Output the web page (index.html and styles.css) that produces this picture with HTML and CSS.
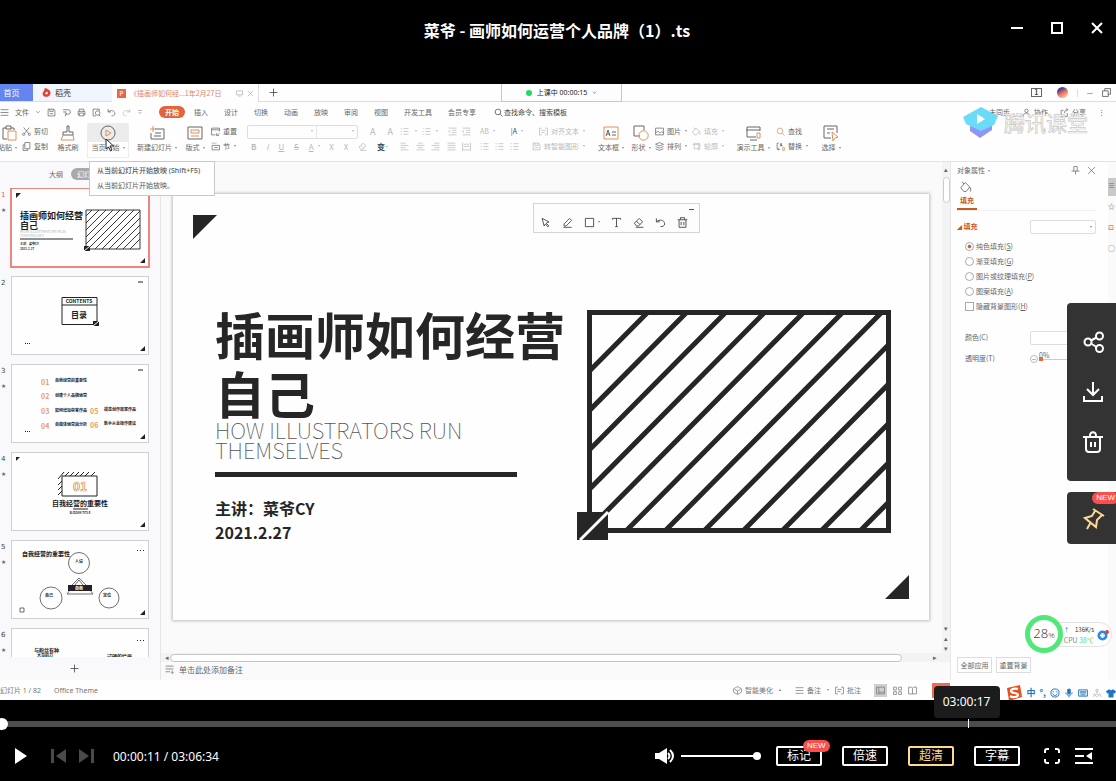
FILE: index.html
```html
<!DOCTYPE html>
<html lang="zh-CN">
<head>
<meta charset="utf-8">
<title>菜爷 - 画师如何运营个人品牌（1）.ts</title>
<link rel="stylesheet" href="styles.css">
</head>
<body>
<svg class="defs" aria-hidden="true">
  <defs>
    <symbol id="menu" viewBox="0 0 16 16"><path d="M1 3h14M1 8h14M1 13h14"/></symbol>
    <symbol id="chev" viewBox="0 0 16 16"><path d="M3 5l5 6 5-6"/></symbol>
    <symbol id="save" viewBox="0 0 16 16"><path d="M2 2h10l2 2v10H2zM5 2v4h6V2M5 10h6"/></symbol>
    <symbol id="export" viewBox="0 0 16 16"><path d="M2 3h9a4 4 0 0 1 0 8H6M6 11v4M2 7h6M9 11l-4-3"/></symbol>
    <symbol id="print" viewBox="0 0 16 16"><path d="M4 6V2h8v4M4 12H2V6h12v6h-2M4 9h8v5H4z"/></symbol>
    <symbol id="preview" viewBox="0 0 16 16"><path d="M13 5V2H2v12h5M12 12l3 3"/><circle cx="10" cy="9" r="4"/></symbol>
    <symbol id="undo" viewBox="0 0 16 16"><path d="M2 2v5h5M2 7c4-4 12-3 12 3 0 3-3 4-6 4"/></symbol>
    <symbol id="redo" viewBox="0 0 16 16"><path d="M14 2v5H9M14 7C10 3 2 4 2 10c0 3 3 4 6 4"/></symbol>
    <symbol id="more" viewBox="0 0 16 16"><path d="M3 4h10M4 8l4 4 4-4"/></symbol>
    <symbol id="search" viewBox="0 0 16 16"><circle cx="7" cy="7" r="5"/><path d="M11 11l4 4"/></symbol>
    <symbol id="paste" viewBox="0 0 16 16"><path d="M5 3H2v11h4M10 3h3v2M5 1h5v3H5z"/><path class="warm" d="M7 6h8v9H7z"/></symbol>
    <symbol id="cut" viewBox="0 0 16 16"><path d="M3 1l9 11M13 1L4 12"/><circle cx="3" cy="13" r="2"/><circle cx="13" cy="13" r="2"/></symbol>
    <symbol id="copy" viewBox="0 0 16 16"><path d="M5 1h9v11H5zM5 5H2v10h8v-3"/></symbol>
    <symbol id="brush" viewBox="0 0 16 16"><path d="M7 1h2v6h4v3H3V7h4z"/><path class="warm" d="M3 10L1 15h13l-1-5"/></symbol>
    <symbol id="playc" viewBox="0 0 16 16"><circle cx="8" cy="8" r="7"/><path class="warm" d="M6 5l5 3-5 3z"/></symbol>
    <symbol id="newslide" viewBox="0 0 16 16"><path d="M6 4h9v10H2V8M6 8h6M5 11h7"/><path class="warm" d="M4 1v6M1 4h6"/></symbol>
    <symbol id="layout" viewBox="0 0 16 16"><path d="M1 2h14v12H1z"/><path class="warm" d="M4 5h8v3H4zM4 11h8"/></symbol>
    <symbol id="reset" viewBox="0 0 16 16"><path d="M8 14H1V2h14v6M1 5h14M15 11l-4 4M10 11v4h4"/></symbol>
    <symbol id="section" viewBox="0 0 16 16"><path d="M2 6h13v8H2zM6 10h6"/><path class="warm" d="M1 2h9"/></symbol>
    <symbol id="eraser" viewBox="0 0 16 16"><path d="M9 2l5 5-6 6H5L2 9zM5 6l5 5M4 15h11"/></symbol>
    <symbol id="bullets" viewBox="0 0 16 16"><path d="M1 3h2M6 3h9M1 8h2M6 8h9M1 13h2M6 13h9"/></symbol>
    <symbol id="indent" viewBox="0 0 16 16"><path d="M1 2h14M7 6h8M7 10h8M1 14h14M4 6L1 8l3 2"/></symbol>
    <symbol id="left" viewBox="0 0 16 16"><path d="M1 2h9M1 6h14M1 10h9M1 14h14"/></symbol>
    <symbol id="center" viewBox="0 0 16 16"><path d="M4 2h8M1 6h14M4 10h8M1 14h14"/></symbol>
    <symbol id="right" viewBox="0 0 16 16"><path d="M6 2h9M1 6h14M6 10h9M1 14h14"/></symbol>
    <symbol id="just" viewBox="0 0 16 16"><path d="M1 2h14M1 6h14M1 10h14M1 14h14"/></symbol>
    <symbol id="spread" viewBox="0 0 16 16"><path d="M1 1v14M15 1v14M3 4h10M3 8h10M1 14h14"/></symbol>
    <symbol id="textdoc" viewBox="0 0 16 16"><path d="M5 2H1v12h4M11 2h4v12h-4M4 6h8M4 10h6"/></symbol>
    <symbol id="textbox" viewBox="0 0 16 16"><path class="warm" d="M1 2h14v12H1z"/><path d="M3 11l2-6 2 6M4 9h3M9 7h4M9 10h4"/></symbol>
    <symbol id="shapes" viewBox="0 0 16 16"><path d="M7 11H1V1h10v4"/><circle class="warm" cx="10.500" cy="10.500" r="4.700"/></symbol>
    <symbol id="picture" viewBox="0 0 16 16"><path d="M1 2h14v12H1zM1 11l4-4 4 4 3-3 3 3"/></symbol>
    <symbol id="layers" viewBox="0 0 16 16"><path d="M8 1l7 3-7 3-7-3zM1 8l7 3 7-3M1 12l7 3 7-3"/></symbol>
    <symbol id="bucket" viewBox="0 0 16 16"><path d="M7 2l6 6-5 6H5L1 9zM5 4L3 1M13 8c1 2 2 3 1 6"/></symbol>
    <symbol id="outline" viewBox="0 0 16 16"><path d="M4 1v11h11M1 4h11v11M6 3h8v7"/></symbol>
    <symbol id="present" viewBox="0 0 16 16"><path d="M11 12H2V2h13v4M1 5h14M5 15h7"/><path class="warm" d="M12 8h3v5h-3z"/></symbol>
    <symbol id="replace" viewBox="0 0 16 16"><path d="M5 2H2v11h4M4 11l2 2-2 2M7 8l2-6 2 6M8 6h3"/><path class="warm" d="M12 10h3v5h-3z"/></symbol>
    <symbol id="select" viewBox="0 0 16 16"><path d="M8 13H1V1h13v7M4 4h7M4 8h3"/><path class="warm" d="M9 7l6 5-3 1-2 3z"/></symbol>
    <symbol id="cursor" viewBox="0 0 16 16"><path d="M3 2l10 5-4 2 4 4-2 1-3-4-2 3z"/></symbol>
    <symbol id="pen" viewBox="0 0 16 16"><path d="M3 10l8-8 3 3-8 8H3zM2 15h12"/></symbol>
    <symbol id="square" viewBox="0 0 16 16"><path d="M2 2h12v12H2z"/></symbol>
    <symbol id="tee" viewBox="0 0 16 16"><path d="M2 4V2h12v2M8 2v12M6 14h4"/></symbol>
    <symbol id="bin" viewBox="0 0 16 16"><path d="M1 4h14M5 4V1h6v3M3 4v11h10V4M6 7v5M10 7v5"/></symbol>
    <symbol id="cross" viewBox="0 0 16 16"><path d="M2 2l12 12M14 2L2 14"/></symbol>
    <symbol id="plus" viewBox="0 0 16 16"><path d="M8 1v14M1 8h14"/></symbol>
    <symbol id="pin" viewBox="0 0 16 16"><path d="M5 1h6M5 1v8M11 1v8M1 9h14M8 9v6"/></symbol>
    <symbol id="notes" viewBox="0 0 16 16"><path d="M1 2h14M1 7h14M1 12h8M13 10v5M11 13l2 2 2-2"/></symbol>
    <symbol id="cube" viewBox="0 0 16 16"><path d="M8 1l7 4v6l-7 4-7-4V5zM3 6l5 3 5-3M8 9v5"/></symbol>
    <symbol id="grid4" viewBox="0 0 16 16"><path d="M1 2h5v5H1zM10 2h5v5h-5zM1 10h5v5H1zM10 10h5v5h-5z"/></symbol>
    <symbol id="book" viewBox="0 0 16 16"><path d="M1 2h5l2 2 2-2h5v12H1zM8 4v10"/></symbol>
    <symbol id="pane" viewBox="0 0 16 16"><path d="M1 2h14v12H1zM5 2v12M5 11h10"/></symbol>
    <symbol id="cloud" viewBox="0 0 16 16"><circle cx="8" cy="8" r="6"/><path d="M8 4v5"/></symbol>
    <symbol id="person" viewBox="0 0 16 16"><circle cx="8" cy="5" r="3"/><path d="M2 15c0-8 12-8 12 0"/></symbol>
    <symbol id="shareout" viewBox="0 0 16 16"><path d="M6 4H2v11h11V9M8 9c0-4 2-6 6-6M11 1l3 2-3 3"/></symbol>
    <symbol id="screen" viewBox="0 0 16 16"><path d="M1 2h14v9H1zM5 14h6"/></symbol>
    <symbol id="restore" viewBox="0 0 16 16"><path d="M1 5h10v10H1zM5 5V1h10v10h-4"/></symbol>
  </defs>
</svg>

<main class="player">
  <header class="titlebar">
    <h1>菜爷 - 画师如何运营个人品牌（1）.ts</h1>
    <div class="winbtns">
      <button aria-label="最小化"><svg viewBox="0 0 14 14"><path d="M1 7h12"/></svg></button>
      <button aria-label="最大化"><svg viewBox="0 0 14 14"><path d="M2 2h10v10H2z"/></svg></button>
      <button aria-label="关闭"><svg viewBox="0 0 14 14"><path d="M2 2l10 10M12 2L2 12"/></svg></button>
    </div>
  </header>

  <section class="stage">
    <nav class="tabs">
      <a class="tab home" href="#">首页</a>
      <a class="tab docer" href="#"><svg class="flame" viewBox="0 0 16 16"><path d="M5 0c6 1 11 5 10 10-1 7-13 8-14 0 0-3 4-5 4-10z"/><path class="cut" d="M5 9l5-3v5H7z"/></svg>稻壳</a>
      <a class="tab doc" href="#"><span class="ppt">P</span>《插画师如何经...1年2月27日<svg class="ic dim push"><use href="#screen"/></svg><svg class="ic dim"><use href="#cross"/></svg></a>
      <button class="newtab" aria-label="新建"><svg class="ic"><use href="#plus"/></svg></button>
      <div class="tabend"><span class="one">1</span><span class="avatar"></span><i></i><span>—</span><svg class="ic"><use href="#restore"/></svg></div>
      <div class="live"><b></b>上课中 00:00:15<svg class="ic"><use href="#chev"/></svg></div>
    </nav>

    <nav class="menubar">
      <div class="quick">
        <svg class="ic"><use href="#menu"/></svg><span>文件</span><svg class="ic small"><use href="#chev"/></svg>
        <svg class="ic"><use href="#save"/></svg><svg class="ic"><use href="#export"/></svg><svg class="ic"><use href="#print"/></svg><svg class="ic"><use href="#preview"/></svg><svg class="ic"><use href="#undo"/></svg><svg class="ic dim"><use href="#redo"/></svg><svg class="ic small"><use href="#more"/></svg>
      </div>
      <a class="on" href="#">开始</a><a href="#">插入</a><a href="#">设计</a><a href="#">切换</a><a href="#">动画</a><a href="#">放映</a><a href="#">审阅</a><a href="#">视图</a><a href="#">开发工具</a><a href="#">会员专享</a>
      <label class="find"><svg class="ic"><use href="#search"/></svg><input value="查找命令、搜索模板" aria-label="查找命令"></label>
      <div class="menuend"><span><svg class="ic"><use href="#cloud"/></svg>未同步</span><span><svg class="ic"><use href="#person"/></svg>协作</span><span><svg class="ic"><use href="#shareout"/></svg>分享</span><span>⋮</span></div>
    </nav>

    <div class="ribbon">
      <button class="big clip"><svg><use href="#paste"/></svg><span>粘贴<i></i></span></button>
      <div class="pair"><button><svg><use href="#cut"/></svg>剪切</button><button><svg><use href="#copy"/></svg>复制</button></div>
      <button class="big w28"><svg><use href="#brush"/></svg><span>格式刷</span></button>
      <button class="big w40 hover"><svg><use href="#playc"/></svg><span>当页开始<i></i></span></button>
      <button class="big w48"><svg><use href="#newslide"/></svg><span>新建幻灯片<i></i></span></button>
      <button class="big w24"><svg><use href="#layout"/></svg><span>版式<i></i></span></button>
      <div class="pair"><button><svg><use href="#reset"/></svg>重置</button><button><svg><use href="#section"/></svg>节<i></i></button></div>
      <div class="pair faint font">
        <div><span class="combo"><select aria-label="字体"><option></option></select><i></i><select aria-label="字号"><option></option></select><i></i></span><span>A</span><span>A</span></div>
        <div><b>B</b><em>I</em><u>U</u><s>S</s><span><u>A</u><i></i></span><span>X</span><span>X</span><svg><use href="#eraser"/></svg><strong>变<i></i></strong></div>
      </div>
      <div class="pair faint five">
        <div><svg><use href="#bullets"/></svg><i></i><svg><use href="#bullets"/></svg><i></i><span></span><svg><use href="#indent"/></svg><svg><use href="#indent"/></svg></div>
        <div><svg><use href="#left"/></svg><svg><use href="#center"/></svg><svg><use href="#right"/></svg><svg><use href="#just"/></svg><svg><use href="#spread"/></svg></div>
      </div>
      <div class="pair faint dir">
        <div><span>AB<i></i></span><span class="dark">|A<i></i></span><span><svg><use href="#textdoc"/></svg>对齐文本<i></i></span></div>
        <div><span class="trio"><svg><use href="#bullets"/></svg><svg><use href="#bullets"/></svg><svg><use href="#bullets"/></svg></span><span><svg><use href="#save"/></svg>转智能图形<i></i></span></div>
      </div>
      <button class="big w32"><svg><use href="#textbox"/></svg><span>文本框<i></i></span></button>
      <button class="big w24"><svg><use href="#shapes"/></svg><span>形状<i></i></span></button>
      <div class="pair"><button><svg><use href="#picture"/></svg>图片<i></i></button><button><svg><use href="#layers"/></svg>排列<i></i></button></div>
      <div class="pair faint"><button><svg><use href="#bucket"/></svg>填充<i></i></button><button><svg><use href="#outline"/></svg>轮廓<i></i></button></div>
      <button class="big w36"><svg><use href="#present"/></svg><span>演示工具<i></i></span></button>
      <div class="pair"><button><svg><use href="#search" class="warm"/></svg>查找</button><button><svg><use href="#replace"/></svg>替换<i></i></button></div>
      <button class="big w24"><svg><use href="#select"/></svg><span>选择<i></i></span></button>
    </div>

    <div class="work">
      <aside class="outline">
        <div class="switch"><button>大纲</button><button class="on">幻灯片</button></div>
        <ol class="thumbs">
          <li class="cur"><span>1<br><small>★</small></span>
            <svg viewBox="0 0 138 79"><path class="k" d="M5 5h5l-5 5zM134 70v5h-5z"/><text x="9" y="31" class="t9">插画师如何经营</text><text x="9" y="41" class="t9">自己</text><text x="9" y="45" class="t4 g">HOW ILLUSTRATORS RUN</text><text x="9" y="49" class="t4 g">THEMSELVES</text><path class="l" d="M9 51h53"/><text x="9" y="57" class="t3">主讲：菜爷CY</text><text x="9" y="62" class="t3">2021.2.27</text><path class="l hair" d="M75 22h54v39H75zM75 28l6-6M75 35l13-13M75 42l20-20M75 49l27-27M75 56l34-34M77 61l39-39M84 61l39-39M91 61l38-38M98 61l31-31M105 61l24-24M112 61l17-17M119 61l10-10"/><path class="k" d="M73 58h6v5h-6z"/><path class="w" d="M73 63l6-5"/></svg></li>
          <li><span>2</span>
            <svg viewBox="0 0 138 79"><path class="l" d="M51 21.500h35v27H51zM51 29h35M127 6h5"/><text x="68" y="27" class="t5 mid">CONTENTS</text><text x="68" y="42" class="t8 mid">目录</text><path class="k" d="M82 45h6v5h-6zM134 70v5h-5zM14 67h1v1h-1zM16 67h1v1h-1zM18 67h1v1h-1z"/><path class="w" d="M82 50l6-5"/></svg></li>
          <li><span>3<br><small>★</small></span>
            <svg viewBox="0 0 138 79"><g class="n"><text x="30" y="21">01</text><text x="30" y="35">02</text><text x="30" y="50">03</text><text x="30" y="65">04</text><text x="79" y="50">05</text><text x="79" y="64">06</text></g><g class="t35"><text x="44" y="18">自我经营的重要性</text><text x="44" y="33">创建个人品牌运营</text><text x="44" y="48">如何增加获客作品</text><text x="44" y="62">自媒体运营與分析</text><text x="93" y="47">提高创作效率作品</text><text x="93" y="61">新手从业操作建议</text></g><path class="l" d="M127 6h5"/><path class="k" d="M134 70v5h-5zM14 67h1v1h-1zM16 67h1v1h-1zM18 67h1v1h-1z"/></svg></li>
          <li><span>4<br><small>★</small></span>
            <svg viewBox="0 0 138 79"><path class="k" d="M5 5h4l-4 4zM134 70v5h-5z"/><path class="l" d="M51 24h35v20H51zM47 27l6-7M54 24l4-4M59 24l4-4M64 24l4-4M69 24l4-4M74 24l4-4M80 24l4-4M47 33l4-4M47 38l4-4M47 43l4-4M62 57h15"/><text x="69" y="39" class="big01">01</text><text x="69" y="54" class="t65 mid">自我经营的重要性</text><text x="69" y="62" class="t3 mid">SLOGAN TITLE</text></svg></li>
          <li><span>5<br><small>★</small></span>
            <svg viewBox="0 0 138 79"><text x="11" y="16" class="t6">自我经营的重要性</text><circle class="thin" cx="68" cy="23" r="10.500"/><circle class="thin" cx="40" cy="58" r="11"/><circle class="thin" cx="98" cy="58" r="10"/><path class="k" d="M57 45h24v6H57zM126 10h1v1h-1zM129 10h1v1h-1zM132 10h1v1h-1zM134 70v5h-5z"/><path class="thin" d="M61 45l7-7 7 7M64 45l4-5 4 5M56 54h26l-3-4M56 54l3-4M9 68h4v4H9z"/><text x="68" y="50" class="t4 mid wt">自我</text><text x="68" y="23" class="t4 mid">人设</text><text x="38" y="57" class="t4 mid">自己</text><text x="96" y="57" class="t4 mid">定位</text></svg></li>
          <li><span>6<br><small>★</small></span>
            <svg viewBox="0 0 138 79"><text x="23" y="24" class="t45">与粉丝有种</text><text x="26" y="29" class="t4">大哥的力</text><text x="96" y="30" class="t45">过硬的绘画</text><path class="k" d="M126 12h1v1h-1zM129 12h1v1h-1zM132 12h1v1h-1z"/></svg></li>
        </ol>
        <button class="add" aria-label="新建幻灯片"><svg class="ic"><use href="#plus"/></svg></button>
      </aside>

      <section class="editor">
        <div class="canvas">
          <article class="slide">
            <svg class="tri tl" viewBox="0 0 24 24"><path d="M0 0h24L0 24z"/></svg>
            <div class="copytext">
              <h2>插画师如何经营<br>自己</h2>
              <p class="en">HOW ILLUSTRATORS RUN<br>THEMSELVES</p>
              <hr>
              <p class="by">主讲：菜爷CY<br>2021.2.27</p>
            </div>
            <svg class="art" viewBox="0 0 315 232">
              <clipPath id="box"><path d="M12 3h300v217H12z"/></clipPath>
              <path class="bars" clip-path="url(#box)" d="M-70 223L153-2M-31 223L192-2M-109 223L114-2M-148 223L75-2M8 223L231-2M47 223L270-2M86 223L309-2M125 223L348-2M164 223L387-2M203 223L426-2M242 223L465-2M281 223L504-2"/>
              <path class="frame" d="M12.500 2.500h299v218h-299z"/>
              <path d="M0 202h31v28H0z"/><path class="slash" d="M3 230l28-28"/>
            </svg>
            <svg class="tri br" viewBox="0 0 24 24"><path d="M24 0v24H0z"/></svg>
          </article>
          <div class="annot"><span class="dash"></span><svg class="ic"><use href="#cursor"/></svg><svg class="ic"><use href="#pen"/></svg><span class="sq"><svg class="ic"><use href="#square"/></svg><i></i></span><svg class="ic"><use href="#tee"/></svg><svg class="ic"><use href="#eraser"/></svg><svg class="ic"><use href="#undo"/></svg><svg class="ic"><use href="#bin"/></svg></div>
        </div>
        <div class="vbar"><span>▴</span><b></b><span class="dn">▾<br>▴<br>▾</span></div>
        <div class="hbar"><span>◂</span><b></b><span>▸</span></div>
        <div class="note"><svg class="ic"><use href="#notes"/></svg>单击此处添加备注</div>
      </section>

      <aside class="props">
        <header><span>对象属性<i></i></span><svg class="ic"><use href="#pin"/></svg><svg class="ic"><use href="#cross"/></svg></header>
        <div class="ptab"><svg><use href="#bucket"/></svg><b>填充</b></div>
        <div class="sect"><b><small>◢</small> 填充</b><span class="drop"><select aria-label="填充样式"><option></option></select><i></i></span></div>
        <div class="opts">
          <label><input type="radio" name="f" checked>纯色填充(<u>S</u>)</label>
          <label><input type="radio" name="f">渐变填充(<u>G</u>)</label>
          <label><input type="radio" name="f">图片或纹理填充(<u>P</u>)</label>
          <label><input type="radio" name="f">图案填充(<u>A</u>)</label>
          <label><input type="checkbox">隐藏背景图形(<u>H</u>)</label>
        </div>
        <div class="row"><label for="col">颜色(C)</label><select id="col"><option></option></select></div>
        <div class="row"><label for="alpha">透明度(T)</label><span class="alpha"><em>−</em><span class="slide-in"><span>0%</span><input id="alpha" type="range" value="0"></span></span></div>
        <footer><button>全部应用</button><button>重置背景</button></footer>
      </aside>
      <div class="strip"><span class="on">≡</span><span>☆</span><span>⊡</span><span>○</span></div>
    </div>

    <footer class="status">
      <span class="pg">幻灯片 1 / 82</span><span>Office Theme</span>
      <div class="tools"><span><svg class="ic"><use href="#cube"/></svg>智能美化<i class="up"></i></span><span><svg class="ic"><use href="#menu"/></svg>备注<i></i></span><span><svg class="ic"><use href="#textdoc"/></svg>批注</span><span class="views"><svg class="ic act"><use href="#pane"/></svg><svg class="ic"><use href="#grid4"/></svg><svg class="ic"><use href="#book"/></svg></span><b></b></div>
    </footer>

    <div class="tip"><b>从当前幻灯片开始放映 (Shift+F5)</b><span>从当前幻灯片开始放映。</span></div>
    <svg class="pointer" viewBox="0 0 10 14"><path d="M1 1v10l2.500-2 2 4 1.500-1-2-4h3.500z"/></svg>

    <div class="mark">
      <svg viewBox="0 0 36 31"><path fill="#8f96f5" d="M7 17l11 6 11-6v6l-12 8-10-7z"/><path fill="#6bdcf8" d="M18 0l17 9-4 9-13 6L3 17 0 10z"/><path fill="#fff" d="M14 7l8 5-8 5z"/></svg><span>腾讯课堂</span>
    </div>

    <div class="meter"><b>28<small>%</small></b><p><span><em>↑</em> 136K/s</span><span class="cpu">CPU <q>38℃</q></span></p><svg viewBox="0 0 12 12"><circle cx="5.500" cy="6.500" r="5" fill="#2b8bea"/><path stroke="#fff" stroke-width="2" d="M5.500 4v5M3 6.500h5"/><circle cx="10" cy="3" r="2" fill="#ee3b35"/></svg></div>

    <div class="ime">
      <svg viewBox="0 0 16 16"><path fill="#e8501f" d="M1 3l13-3 2 12-13 4z"/><path fill="none" stroke="#fff" stroke-width="2.200" d="M12 4c-3-1-7 0-7 2 0 3 7 1 7 4 0 2-5 3-8 1"/></svg>
      <span>中</span><span>°,</span>
      <svg class="s" viewBox="0 0 16 16"><circle cx="8" cy="8" r="6.500"/><path d="M5 5v2M11 5v2M4 9c2 4 6 4 8 0"/></svg>
      <svg class="s" viewBox="0 0 16 16"><path fill="#1d74c4" d="M6 2h4v7H6z"/><path d="M3 7c0 6 10 6 10 0M8 12v3"/></svg>
      <svg class="s" viewBox="0 0 16 16"><path d="M1 3h14v10H1zM3 6h10M3 8h10M4 11h8"/></svg>
      <svg class="s pale" viewBox="0 0 16 16"><circle cx="8" cy="4" r="2"/><path d="M8 6v5M2 14l2-5 3 5M9 14l3-5 3 5"/></svg>
      <svg viewBox="0 0 16 16"><path fill="#1d74c4" d="M5 2c2 2 4 2 6 0l5 3-2 4-2-1v7H4V8L2 9 0 5z"/></svg>
    </div>

    <div class="dock">
      <div class="panel">
        <button aria-label="分享"><svg viewBox="0 0 22 22"><circle cx="5" cy="11" r="3.500"/><circle cx="16.500" cy="5" r="3.500"/><circle cx="16.500" cy="17.500" r="3.500"/><path d="M8 9.500l5.500-3M8 12.500l5.500 3.500"/></svg></button>
        <button aria-label="下载"><svg viewBox="0 0 22 22"><path d="M10 1v13M4 8l6 6 6-6M1 15v5h18v-5"/></svg></button>
        <button aria-label="删除"><svg viewBox="0 0 22 22"><path d="M0 6h20M7 5c0-5 6-5 6 0M3 6v12q0 3 3 3h8q3 0 3-3V6M8 11v5M12 11v5"/></svg></button>
      </div>
      <div class="panel gold">
        <button aria-label="置顶"><svg viewBox="0 0 22 22"><path d="M10 1l11 7M12 3L9 8l-7 2 11 9 1-7 5-5M8 14l-4 7"/></svg></button><span class="new">NEW</span>
      </div>
    </div>
  </section>

  <footer class="controls">
    <div class="track"><span class="knob"></span><span class="hover"><time>03:00:17</time></span></div>
    <div class="bar">
      <button class="play" aria-label="播放"><svg viewBox="0 0 12 18"><path d="M0 1l12 8-12 8z"/></svg></button>
      <button class="skip" aria-label="上一个"><svg viewBox="0 0 16 14"><path d="M0 0h3v14H0zM15 0v14L5 7z"/></svg></button>
      <button class="skip" aria-label="下一个"><svg viewBox="0 0 16 14"><path d="M13 0h3v14h-3zM1 0v14l10-7z"/></svg></button>
      <span class="time">00:00:11 / 03:06:34</span>
      <div class="end">
        <button class="vol" aria-label="音量"><svg viewBox="0 0 20 18"><path class="f" d="M0 6h4l8-5v16l-8-5H0z"/><path class="o" d="M13 6q3 3 0 6M15 3q6 6 0 12"/></svg></button>
        <input class="level" type="range" value="100" aria-label="音量大小">
        <div class="modes"><button>标记<span class="new">NEW</span></button><button>倍速</button><button class="hd">超清</button><button>字幕</button></div>
        <button class="tool" aria-label="全屏"><svg viewBox="0 0 18 18"><path d="M2 6V4q0-2 2-2h2M12 2h2q2 0 2 2v2M16 12v2q0 2-2 2h-2M6 16H4q-2 0-2-2v-2"/></svg></button>
        <button class="tool" aria-label="播放列表"><svg viewBox="0 0 18 18"><path d="M0 2h18M0 9h9M0 16h18"/><path class="f" d="M17 5v8l-6-4z"/></svg></button>
      </div>
    </div>
  </footer>
</main>
</body>
</html>
```
FILE: styles.css
```css
* { box-sizing: border-box; }
body { margin: 0; background: #000; font-family: "Noto Sans", "Noto Sans CJK SC", sans-serif; }
h1, h2, p, ol { margin: 0; padding: 0; }
button, input, select { font: inherit; color: inherit; background: none; border: 0; padding: 0; margin: 0; }
a { color: inherit; text-decoration: none; }
svg { display: block; flex: none; }
.defs { position: absolute; width: 0; height: 0; }
.player { display: flex; flex-direction: column; min-height: 100vh; overflow: hidden; }

/* player title */
.titlebar { position: relative; height: 84px; padding: 18px 2px 0 0; color: #fff; text-align: center; }
.titlebar h1 { font: 700 16px/24px "Noto Sans CJK SC", sans-serif; }
.winbtns { position: absolute; top: 21px; right: 12px; display: flex; gap: 26px; }
.winbtns svg { width: 14px; height: 14px; fill: none; stroke: #fff; stroke-width: 2; }

/* recorded desktop */
.stage { position: relative; flex: 1; display: flex; flex-direction: column; background: #fdfefd; color: #666; font: 7px/15px "Noto Sans CJK SC", sans-serif; overflow: hidden; white-space: nowrap; }
.ic, .ribbon svg { width: 9px; height: 9px; fill: none; stroke: currentColor; stroke-width: 1.3; }
.ic.small { width: 6px; height: 6px; }
.dim { color: #bbb; }
.warm { stroke: #df905c; }
.stage i { display: inline-block; margin-left: 3px; border: 1px solid transparent; border-top: 2px solid #888; vertical-align: middle; }
.stage i.up { border-top: 0; border-bottom: 2px solid #666; }

.tabs { position: relative; display: flex; height: 18px; border-bottom: 1px solid #dcdfe2; }
.tab { display: flex; align-items: center; gap: 4px; font-size: 8px; }
.home { width: 33px; justify-content: center; padding-right: 10px; background: #6484ef; color: #fff; }
.docer { width: 79px; padding-left: 9px; background: #f1f6fe; color: #333; }
.flame { width: 9px; height: 9px; fill: #e6402b; }
.flame .cut { fill: #fff; }
.doc { width: 147px; padding: 0 4px 0 5px; height: 18px; background: #fff; border-right: 1px solid #ddd; color: #e38067; font-size: 7px; }
.ppt { width: 9px; height: 9px; background: #e4694b; color: #fff; font-size: 6px; line-height: 9px; text-align: center; }
.doc .push { margin-left: auto; }
.doc .ic { width: 7px; height: 7px; color: #999; }
.newtab { padding: 0 10px; color: #333; }
.tabend { display: flex; align-items: center; gap: 9px; margin-left: auto; padding-right: 5px; color: #444; }
.tabend i { height: 8px; margin: 0; border: 0; border-left: 1px solid #ddd; }
.one { width: 11px; height: 9px; border: 1px solid #666; line-height: 7px; font-weight: 700; text-align: center; }
.avatar { width: 11px; height: 11px; margin-left: 6px; border-radius: 50%; background: linear-gradient(150deg, #4a3da8 25%, #e76f55 50%, #f5b79a 80%); }
.live { position: absolute; left: 501px; top: 0; width: 121px; height: 18px; display: flex; align-items: center; justify-content: center; gap: 5px; background: #fdfdff; border: 1px solid #c5c7cb; border-top: 0; color: #222; font-family: "Noto Sans", "Noto Sans CJK SC", sans-serif; }
.live b { width: 6px; height: 6px; border-radius: 50%; background: #23d865; }
.live .ic { width: 5px; height: 5px; }

.menubar { display: flex; align-items: center; height: 20px; gap: 15px; }
.quick { display: flex; align-items: center; gap: 6px; width: 151px; margin-right: -7px; }
.menubar .on { margin: 0 -7px 0 0; padding: 0 6px; border-radius: 6px; background: #e2633d; color: #fff; font-weight: 700; line-height: 12px; }
.menubar a + a { margin-left: 1px; }
.find { display: flex; align-items: center; gap: 1px; margin-left: 3px; color: #444; }
.find input { width: 76px; }
.menuend { display: flex; align-items: center; gap: 12px; margin-left: auto; padding-right: 11px; }
.menuend span { display: flex; gap: 3px; align-items: center; }

.ribbon { display: grid; grid-template-columns: 22px 32px 34px 45px 50px 28px 36px 153px 80px 115px 34px 26px 37px 43px 41px 43px 24px; height: 40px; padding-top: 2px; justify-items: start; border-bottom: 1px solid #e2e4e4; }
.big { display: flex; flex-direction: column; align-items: center; height: 33px; }
.big svg { width: 16px; height: 16px; stroke-width: 1; margin-top: 1px; }
.big span { line-height: 13px; }
.w24 { width: 24px; }
.w28 { width: 28px; }
.w32 { width: 32px; }
.w36 { width: 36px; }
.w40 { width: 40px; }
.w48 { width: 48px; }
.clip { width: 17px; align-items: flex-end; overflow: hidden; }
.hover.big { background: linear-gradient(#ececec 55%, #fff 55%); outline: 1px solid #eee; }
.pair { display: grid; grid-template-rows: 15px 15px; align-content: start; }
.pair button, .pair div, .pair span { display: flex; align-items: center; gap: 3px; }
.pair i { margin-left: 1px; }
.faint { color: #b9b9b9; }
.faint i { opacity: 0.6; }
.faint strong, .faint .dark { color: #444; }
.font { width: 146px; font-size: 9px; }
.font div { justify-content: space-between; }
.font .combo { gap: 0; width: 111px; height: 14px; padding-right: 3px; border: 1px solid #ddd; border-radius: 2px; }
.combo select { height: 12px; appearance: none; width: 64px; }
.combo select + i + select { width: 36px; margin-left: 3px; border-left: 1px solid #e6e6e6; }
.font div + div { padding: 0 5px 0 4px; font-size: 8px; }
.five { width: 71px; }
.five div { justify-content: space-between; }
.dir { width: 105px; }
.dir div { justify-content: space-between; }
.dir .trio { gap: 6px; }

.work { flex: 1; display: grid; grid-template-columns: 161px 1fr 158px 8px; min-height: 518px; background: #f9faf9; }
.outline { display: flex; flex-direction: column; border-right: 1px solid #e6e6e6; background: #f9f9fb; }
.switch { display: flex; gap: 8px; height: 26px; padding: 0 0 2px 49px; align-items: center; }
.switch .on { padding: 0 6px; border-radius: 6px; background: #a9a9a9; color: #fff; line-height: 12px; }
.thumbs { flex: 1 1 0; display: flex; flex-direction: column; gap: 9px; min-height: 0; overflow: hidden; list-style: none; }
.thumbs li { display: flex; flex: none; }
.thumbs span { width: 11px; color: #444; font: 7px/15px "DejaVu Sans", sans-serif; padding-left: 1px; }
.thumbs small { color: #666; }
.thumbs svg { width: 138px; height: 79px; background: #fefefe; outline: 1px solid #cfd0d2; outline-offset: -1px; font-weight: 700; fill: #222; }
.thumbs .cur svg { outline: 2px solid #e9877c; }
.cur span { color: #e17042; }
.k { fill: #222; }
.l { fill: none; stroke: #222; stroke-width: 1; }
.hair { stroke-width: 0.9; }
.thin { fill: none; stroke: #333; stroke-width: 0.7; }
.w { stroke: #fff; }
.wt { fill: #fff; }
.g { fill: #999; font-weight: 300; }
.mid, .big01 { text-anchor: middle; }
.t3 { font-size: 3px; }
.t35, .t4 { font-size: 4px; }
.t45, .t5 { font-size: 5px; }
.t6 { font-size: 6px; }
.t65 { font-size: 7px; }
.t8 { font-size: 8px; }
.t9 { font-size: 9px; }
.n { font-size: 7px; fill: #ec9b66; }
.big01 { font-size: 12px; fill: #fff; stroke: #e08a50; stroke-width: 0.7; }
.add { height: 23px; padding-left: 70px; color: #333; }

.editor { display: grid; grid-template-columns: 1fr 8px; grid-template-rows: 1fr 9px 18px; min-width: 0; }
.canvas { position: relative; padding: 32px 13px 33px 12px; }
.slide { position: relative; height: 426px; background: #fefefe; box-shadow: 0 0 3px 1px #bdbdbd; color: #262626; }
.tri { position: absolute; width: 24px; height: 24px; fill: #262626; }
.tl { left: 20px; top: 21px; }
.br { right: 20px; bottom: 21px; }
.copytext { position: absolute; left: 42px; top: 110px; }
.copytext h2 { font-size: 50px; line-height: 59px; font-weight: 700; }
.en { margin-top: -3px; font-size: 22px; line-height: 20px; font-weight: 100; color: #555; }
.copytext hr { width: 302px; height: 5px; margin: 13px 0 19px; border: 0; background: #262626; }
.by { font-size: 16px; line-height: 24px; font-weight: 700; }
.art { position: absolute; right: 37px; top: 116px; width: 315px; height: 232px; fill: #262626; }
.frame { fill: none; stroke: #262626; stroke-width: 5; }
.bars { stroke: #262626; stroke-width: 5; }
.slash { stroke: #fefefe; stroke-width: 3; }
.annot { position: absolute; left: 372px; top: 41px; width: 167px; height: 30px; display: flex; align-items: flex-end; justify-content: space-between; padding: 0 11px 4px 6px; background: #fdfdfd; border: 1px solid #d5d5d5; color: #444; }
.annot .ic { width: 11px; height: 11px; }
.sq { display: flex; align-items: center; }
.dash { position: absolute; right: 5px; top: 5px; width: 5px; height: 1px; background: #555; }
.vbar { display: flex; flex-direction: column; align-items: center; background: #f2f3f3; }
.vbar b { width: 7px; height: 26px; border: 1px solid #ccc; border-radius: 4px; background: #fff; }
.vbar .dn { margin-top: auto; line-height: 10px; }
.hbar { grid-column: 1 / 3; display: flex; align-items: center; line-height: 9px; background: #f2f3f3; padding: 0 13px 0 4px; }
.hbar b { flex: 1; height: 8px; margin: 0 31px 0 1px; border: 1px solid #c5c5c5; border-radius: 4px; background: #fff; }
.note { grid-column: 1 / 3; display: flex; align-items: flex-start; gap: 5px; padding-left: 4px; font-size: 8px; }
.note .ic { margin-top: 3px; }

.props { display: flex; flex-direction: column; padding: 0 12px 7px 6px; background: #fdfefd; border-left: 1px solid #e8e8e8; }
.props header { display: flex; align-items: center; gap: 7px; height: 17px; }
.props header span { margin-right: auto; }
.ptab svg { width: 12px; height: 12px; margin: 2px 3px 0; fill: none; stroke: #555; }
.ptab { border-bottom: 1px solid #f0f0f0; color: #c85a1d; }
.ptab b { display: inline-block; padding: 0 3px; border-bottom: 2px solid #c85a1d; }
.sect { display: flex; justify-content: space-between; align-items: center; margin: 8px 0 5px; color: #d0561d; }
.sect small { font-size: 5px; }
.drop { position: relative; display: flex; }
.drop i { position: absolute; right: 4px; top: 6px; }
.props select { height: 14px; width: 66px; border: 1px solid #ddd; border-radius: 2px; appearance: none; background: #fff; }
.opts label { display: flex; align-items: center; padding-left: 8px; }
.opts input { width: 9px; height: 9px; margin-right: 2px; appearance: none; border: 1px solid #aaa; background: #fff; }
.opts input[type=radio] { border-radius: 50%; }
.opts input:checked { background: radial-gradient(#d9603a 38%, #fff 42%); }
.row { display: flex; justify-content: space-between; align-items: center; padding-left: 8px; height: 21px; }
.opts + .row { margin-top: 13px; }
.alpha { display: flex; align-items: center; width: 66px; gap: 1px; }
.alpha em { width: 8px; height: 8px; border: 1px solid #bbb; border-radius: 50%; font-style: normal; line-height: 6px; text-align: center; }
.slide-in { display: grid; line-height: 8px; padding-bottom: 7px; }
.alpha input { width: 54px; height: 1px; appearance: none; background: #ccc; }
.alpha input::-webkit-slider-thumb { appearance: none; width: 4px; height: 4px; background: #e9683e; }
.props footer { display: flex; gap: 4px; margin-top: auto; }
.props footer button { width: 35px; height: 16px; border: 1px solid #ddd; }
.strip { display: flex; flex-direction: column; gap: 3px; padding-top: 16px; }
.strip span { height: 18px; }
.strip .on { background: #c9c9c9; }

.status { display: flex; align-items: center; height: 20px; gap: 13px; color: #777; font-family: "Noto Sans", "Noto Sans CJK SC", sans-serif; }
.pg { width: 41px; overflow: hidden; display: flex; justify-content: flex-end; }
.tools { display: flex; align-items: center; gap: 6px; margin-left: auto; padding-right: 166px; }
.tools > span { display: flex; align-items: center; gap: 3px; }
.tools > span:first-child { margin-right: 8px; }
.tools .views { gap: 6px; margin-left: 7px; }
.views .act { width: 13px; height: 13px; padding: 2px; background: #cfcfcf; }
.tools b { width: 18px; height: 15px; margin-left: 9px; background: #f16a58; }

/* layers over the desktop */
.tip { position: absolute; left: 89px; top: 77px; width: 126px; height: 35px; display: flex; flex-direction: column; padding: 1px 7px; background: #fff; border: 1px solid #c8c8c8; color: #555; }
.tip b { font: 500 7px/15px "Noto Sans", "Noto Sans CJK SC", sans-serif; }
.pointer { position: absolute; left: 105px; top: 54px; width: 10px; height: 14px; fill: #fff; stroke: #222; }
.mark { position: absolute; right: 28px; top: 23px; display: flex; gap: 5px; color: #fff; font-size: 21px; line-height: 31px; -webkit-text-stroke: 0.7px #c8c8c8; }
.mark svg { width: 36px; height: 31px; }
.meter { position: absolute; right: 4px; top: 538px; width: 76px; height: 25px; display: flex; align-items: center; justify-content: flex-end; gap: 3px; padding-right: 2px; border: 1px solid #e2e2e2; border-radius: 13px; background: #fff; font-size: 6px; line-height: 11px; color: #333; }
.meter > b { position: absolute; left: -12px; top: -8px; width: 38px; height: 38px; border: 5px solid #4fe879; border-radius: 50%; background: #fff; font: 300 13px/27px "Noto Sans", sans-serif; text-align: center; color: #444; }
.meter small { font-size: 8px; }
.meter p span { display: block; text-align: right; }
.meter em { color: #2b8bea; margin-right: 4px; font-style: normal; }
.meter .cpu { color: #888; font-size: 7px; }
.meter q { quotes: none; color: #58dd82; }
.meter svg { width: 12px; height: 12px; }
.ime { position: absolute; right: 0; bottom: 0; display: flex; align-items: center; gap: 4px; height: 15px; color: #1d74c4; font-size: 9px; font-weight: 700; background: #fdfefd; }
.ime svg { width: 10px; height: 10px; }
.ime svg:first-child { width: 16px; height: 16px; }
.s { fill: none; stroke: #1d74c4; stroke-width: 1.5; }
.pale { stroke: #bbb; }
.dock { position: absolute; right: 0; top: 219px; width: 49px; display: grid; gap: 11px; }
.panel { position: relative; display: flex; flex-direction: column; align-items: center; gap: 28px; padding: 28px 0; background: #333; border-radius: 4px 0 0 4px; }
.panel svg { width: 22px; height: 22px; margin-left: 4px; fill: none; stroke: #fff; stroke-width: 2; }
.panel.gold { padding: 16px 0 14px; }
.gold svg { stroke: #fdd993; }
.new { position: absolute; height: 12px; padding: 0 4px; border-radius: 6px; background: #f9504e; color: #fff; font: 8px/12px "Liberation Sans", sans-serif; }
.gold .new { right: -3px; top: 0; }

/* player controls */
.controls { height: 81px; padding-top: 21px; color: #fff; font-size: 12px; }
.track { position: relative; height: 6px; background: #4d4d4d; }
.knob { position: absolute; left: -4px; top: -3px; width: 12px; height: 12px; border-radius: 50%; background: #fff; }
.track .hover { position: absolute; left: 86.700%; top: -2px; width: 1px; height: 9px; background: #fff; }
.hover time { position: absolute; left: -34px; bottom: 10px; width: 66px; height: 32px; border-radius: 4px; background: #1c1c1c; line-height: 32px; text-align: center; }
.bar { display: flex; align-items: center; height: 58px; padding: 0 23px 0 15px; }
.bar svg { fill: #fff; }
.play svg { width: 12px; height: 18px; }
.play { margin-right: 24px; }
.skip { margin-right: 11px; }
.bar .skip svg { width: 16px; height: 14px; fill: #4a4a4a; }
.time { margin-left: 8px; }
.end { display: flex; align-items: center; margin-left: auto; }
.vol svg { width: 20px; height: 18px; }
.bar .o { fill: none; stroke: #fff; stroke-width: 2; }
.level { width: 80px; height: 2px; margin-left: 6px; appearance: none; background: #fff; }
.level::-webkit-slider-thumb { appearance: none; width: 8px; height: 8px; border-radius: 50%; background: #fff; }
.modes { display: flex; gap: 20px; margin: 0 23px 0 15px; }
.modes button { position: relative; width: 46px; height: 20px; border: 2px solid #fff; border-radius: 2px; line-height: 16px; }
.modes .new { left: 25px; top: -8px; }
.modes .hd { border-color: #fdd993; color: #fdd993; }
.tool + .tool { margin-left: 14px; }
.bar .tool svg { width: 18px; height: 18px; fill: none; stroke: #fff; stroke-width: 2; }
.tool .f { fill: #fff; stroke: none; }
```
